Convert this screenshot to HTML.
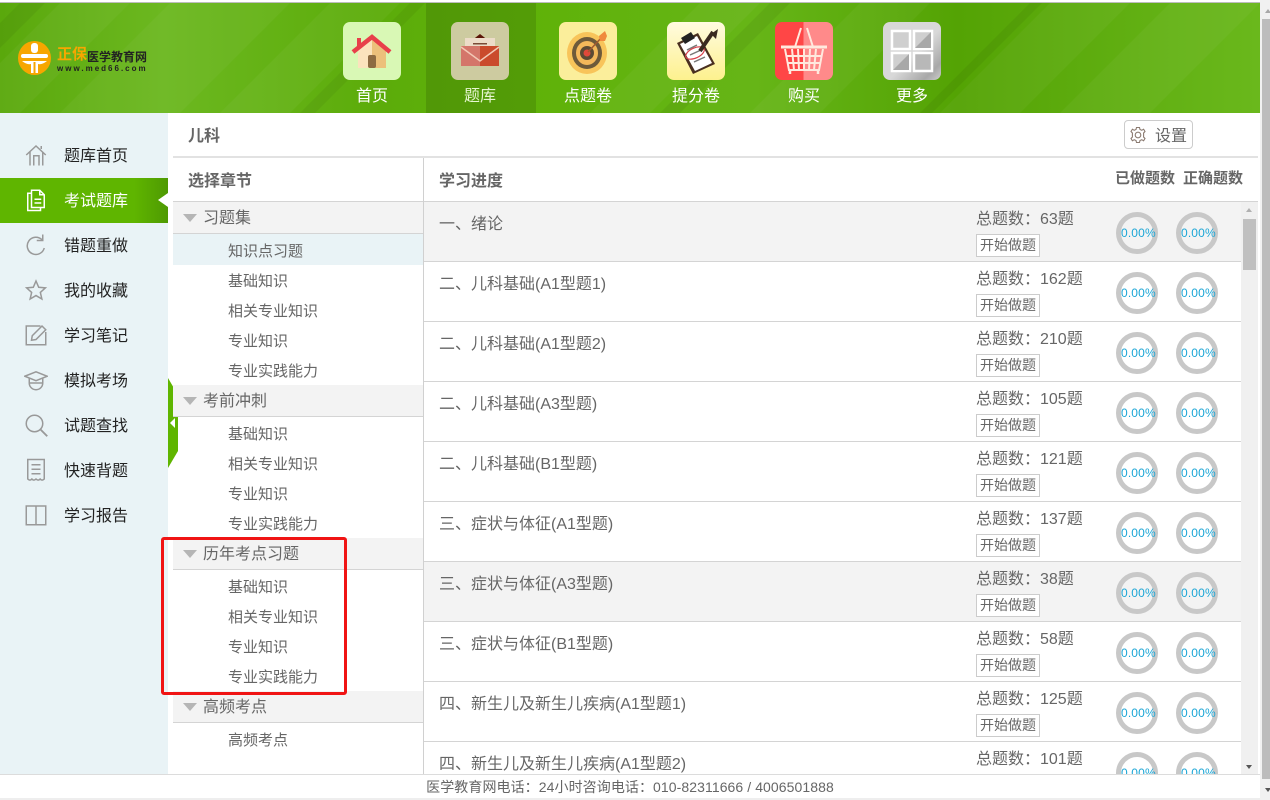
<!DOCTYPE html>
<html lang="zh-CN">
<head>
<meta charset="utf-8">
<title>题库</title>
<style>
html,body{margin:0;padding:0;width:1270px;height:800px;overflow:hidden;background:#fff}
body{position:relative;font-family:"Liberation Sans","Noto Sans CJK SC",sans-serif;color:#666}
div,span,svg{position:absolute;box-sizing:border-box}
.t{white-space:nowrap;line-height:20px}
.nl{color:#fff;font-size:16px;width:108px;text-align:center;top:87px}
.ic{top:22px;width:58px;height:58px;border-radius:7px;overflow:hidden}
.m{left:64px;font-size:16px;color:#222;width:100px}
.si{left:24px;width:24px;height:24px;fill:none;stroke:#999;stroke-width:2}
.g{left:173px;width:250px;height:32px;background:#f3f3f3;border-bottom:1px solid #d4d4d4}
.g span{left:30px;top:7px;font-size:16px;line-height:20px;color:#666;white-space:nowrap}
.g i{position:absolute;left:10px;top:12px;border-left:7px solid transparent;border-right:7px solid transparent;border-top:8px solid #b5b5b5}
.c{left:228px;font-size:15px;color:#666}
.r{left:424px;width:817px;height:60px;border-bottom:1px solid #d4d4d4}
.r .n{left:15px;top:13px;font-size:16px;color:#666;white-space:nowrap;line-height:20px}
.r .q{left:552px;top:8px;font-size:16px;color:#666;white-space:nowrap;line-height:20px}
.r .b{left:552px;top:32px;width:64px;height:23px;border:1px solid #ccc;background:#fff;font-size:14px;line-height:21px;text-align:center;color:#666;white-space:nowrap}
.r .o{top:10px;width:42px;height:42px;border-radius:50%;border:5px solid #c8c8c8;font-size:12px;line-height:32px;text-align:center;color:#1ba6d6;letter-spacing:.15px;padding-right:1px}
.o1{left:692px}.o2{left:752px}
</style>
</head>
<body>
<div style="left:0;top:2px;width:1260px;height:1px;background:#bdbdbd"></div>

<!-- header -->
<svg style="left:0;top:3px" width="1260" height="110" viewBox="0 0 1260 110">
<defs>
<linearGradient id="hg" x1="0" y1="0" x2="1" y2="0">
<stop offset="0" stop-color="#5aa80c"/><stop offset=".13" stop-color="#6cb820"/><stop offset=".3" stop-color="#5cac0a"/><stop offset=".42" stop-color="#5fb208"/><stop offset=".6" stop-color="#66b517"/><stop offset=".76" stop-color="#54a304"/><stop offset="1" stop-color="#6ab81c"/>
</linearGradient>
</defs>
<rect width="1260" height="110" fill="url(#hg)"/>
<g fill="#fff" fill-opacity=".04">
<polygon points="60,0 130,0 20,110 -50,110"/>
<polygon points="170,0 290,0 180,110 60,110"/>
<polygon points="330,0 400,0 290,110 220,110"/>
<polygon points="700,0 760,0 650,110 590,110"/>
<polygon points="860,0 930,0 820,110 750,110"/>
<polygon points="1050,0 1130,0 1020,110 940,110"/>
<polygon points="1170,0 1260,0 1150,110 1060,110"/>
</g>
<g fill="#000" fill-opacity=".05">
<polygon points="20,0 45,0 -65,110 -90,110"/>
<polygon points="410,0 425,0 315,110 300,110"/>
<polygon points="770,0 790,0 680,110 660,110"/>
<polygon points="1030,0 1042,0 932,110 920,110"/>
</g>
<rect x="426" width="110" height="110" fill="#000" fill-opacity=".12"/>
</svg>

<!-- logo -->
<svg style="left:18px;top:41px" width="33" height="34" viewBox="0 0 33 34">
<ellipse cx="16.5" cy="17" rx="16.5" ry="17" fill="#f7a600"/>
<rect x="13" y="2" width="7" height="10" rx="3" fill="#fff"/>
<rect x="3" y="13" width="27" height="4" rx="2" fill="#fff"/>
<path d="M4 20 H29 Q24 24 20 23 V32 H17.5 V21 H15.5 V32 H13 V23 Q9 24 4 20 Z" fill="#fff"/>
</svg>
<div class="t" style="left:57px;top:45px;font-size:15px;font-weight:bold;color:#f7a600;line-height:20px">正保</div>
<div class="t" style="left:87px;top:48px;font-size:12px;font-weight:bold;color:#222;line-height:18px">医学教育网</div>
<div class="t" style="left:57px;top:63px;font-size:8px;font-weight:bold;color:#222;letter-spacing:2px;line-height:12px">www.med66.com</div>

<!-- nav icons -->
<div class="ic" style="left:343px;background:#d9f8b5">
<svg width="58" height="58" viewBox="0 0 58 58" style="left:0;top:0">
<polygon points="15,28 29,16 43,28 43,46 15,46" fill="#fbe3bd"/>
<polygon points="29,16 43,28 43,46 29,46" fill="#ecc07b"/>
<path d="M10 30 L29 15 L47 30" fill="none" stroke="#e8404a" stroke-width="4.5"/>
<rect x="14" y="16" width="4" height="9" fill="#e8404a"/>
<rect x="25" y="33" width="8" height="13" rx="2" fill="#8d6b42"/>
</svg></div>
<div class="ic" style="left:451px;background:#cdcba0">
<svg width="58" height="58" viewBox="0 0 58 58" style="left:0;top:0">
<polygon points="29,12 38,19 20,19" fill="#5c1608"/>
<rect x="14" y="16" width="30" height="22" fill="#ecdcc8"/>
<rect x="22" y="21" width="14" height="1.5" fill="#7a4a36"/>
<rect x="10" y="24" width="19" height="20" fill="#d4766a"/>
<rect x="29" y="24" width="19" height="20" fill="#ca4b2c"/>
<path d="M10 25 L29 39 L48 25" fill="none" stroke="#f2c9b6" stroke-width="1.5"/>
</svg></div>
<div class="ic" style="left:559px;background:#fbee9b">
<svg width="58" height="58" viewBox="0 0 58 58" style="left:0;top:0">
<ellipse cx="28" cy="31" rx="20" ry="21" fill="#f8c45a"/>
<ellipse cx="28" cy="31" rx="15" ry="16" fill="#6e5a3a"/>
<ellipse cx="28" cy="31" rx="11" ry="12" fill="#f4b85a"/>
<circle cx="28" cy="31" r="7" fill="#5c4a34"/>
<circle cx="28" cy="31" r="3.5" fill="#e0483a"/>
<path d="M29 30 L44 14" stroke="#a05a30" stroke-width="1.5"/>
<polygon points="40,14 46,9 48,14 46,19 41,19" fill="#f08a3c"/>
</svg></div>
<div class="ic" style="left:667px;background:linear-gradient(#fffbe0,#fdf18e)">
<svg width="58" height="58" viewBox="0 0 58 58" style="left:0;top:0">
<polygon points="10,21 31,11 48,42 26,52" fill="#4a3020"/>
<polygon points="13,22 30,14 45,41 28,49" fill="#fff"/>
<polygon points="14,16 24,10 28,16 18,22" fill="#222"/>
<path d="M20 28 L30 23 M23 33 L34 28 M27 40 L38 35" stroke="#777" stroke-width="1.5"/>
<ellipse cx="28" cy="31" rx="10" ry="5" fill="none" stroke="#d8404a" stroke-width="1.2" transform="rotate(-25 28 31)"/>
<path d="M33 29 L46 10" stroke="#3a2a20" stroke-width="4"/>
<polygon points="44,12 51,7 49,17" fill="#3a2a20"/>
</svg></div>
<div class="ic" style="left:775px;background:linear-gradient(90deg,#ff4646 49%,#ff8a8a 49%)">
<svg width="58" height="58" viewBox="0 0 58 58" style="left:0;top:0;fill:none;stroke:#ffe9de;stroke-width:2">
<path d="M20 25 L26 6 M38 25 L32 6"/>
<path d="M6 25 H52" stroke-width="3"/>
<path d="M10 27 L14 48 H44 L48 27"/>
<path d="M12 34 H46 M13 41 H45"/>
<path d="M17 27 L19 48 M23 27 L24 48 M29 27 V48 M35 27 L34 48 M41 27 L39 48"/>
<path d="M15 48 V52 M43 48 V52" stroke-width="2.5"/>
</svg></div>
<div class="ic" style="left:883px;background:linear-gradient(135deg,#d8d8d8 55%,#a8a8a8 85%,#ccc)">
<svg width="58" height="58" viewBox="0 0 58 58" style="left:0;top:0">
<g stroke="#fff" stroke-width="2.5" fill="#cfcfcf">
<rect x="9" y="9" width="18" height="18"/>
<rect x="31" y="9" width="18" height="18"/>
<rect x="9" y="31" width="18" height="18"/>
<rect x="31" y="31" width="18" height="18" fill="#b8b8b8"/>
</g>
<polygon points="48,10 48,26 32,26" fill="#a8a8a8"/>
<polygon points="26,32 26,48 10,48" fill="#a8a8a8"/>
</svg></div>

<div class="nl t" style="left:318px">首页</div>
<div class="nl t" style="left:426px;color:#e6f6d0">题库</div>
<div class="nl t" style="left:534px">点题卷</div>
<div class="nl t" style="left:642px">提分卷</div>
<div class="nl t" style="left:750px">购买</div>
<div class="nl t" style="left:858px">更多</div>

<!-- left sidebar -->
<div style="left:0;top:113px;width:168px;height:661px;background:#e9f3f6"></div>
<div style="left:0;top:178px;width:168px;height:45px;background:linear-gradient(90deg,#5fb500 80%,#4e9a02)"></div>
<div style="left:158px;top:193px;border-top:7px solid transparent;border-bottom:7px solid transparent;border-right:10px solid #fff"></div>

<svg class="si" style="top:143px" viewBox="0 0 32 32"><path d="M3 16 L16 4 L29 16 M8 12 V30 M13 30 V17 H20 V30 M25 12 V30"/><path d="M23 8 V4"/></svg>
<svg class="si" style="top:188px;stroke:#fff" viewBox="0 0 32 32"><path d="M10 3 H21 L27 9 V26 H10 Z M21 3 V9 H27 M10 7 H5 V30 H22 V26 M14 15 H23 M14 20 H23"/></svg>
<svg class="si" style="top:233px" viewBox="0 0 32 32"><path d="M24 9 A11.5 11.5 0 1 0 27 20"/><path d="M25 2 V10 H17"/></svg>
<svg class="si" style="top:278px" viewBox="0 0 32 32"><polygon points="16,4 19.6,12.4 28.5,13.2 21.8,19.2 23.8,28 16,23.4 8.2,28 10.2,19.2 3.5,13.2 12.4,12.4"/></svg>
<svg class="si" style="top:323px" viewBox="0 0 32 32"><path d="M22 4 H3 V29 H29 V12"/><path d="M10 23 L11 17 L24 4 L29 9 L16 22 Z"/></svg>
<svg class="si" style="top:368px" viewBox="0 0 32 32"><path d="M1 11 L16 5 L31 11 L16 17 Z"/><path d="M7 14 V20 A9 9 0 0 0 25 20 V14"/><path d="M7 20 H25"/></svg>
<svg class="si" style="top:413px" viewBox="0 0 32 32"><circle cx="14" cy="14" r="11"/><path d="M22 22 L31 31" stroke-width="2.5"/></svg>
<svg class="si" style="top:458px" viewBox="0 0 32 32"><path d="M5 2 H27 V28 Q24 31 21.5 28 Q19 31 16 28 Q13 31 10.5 28 Q8 31 5 28 Z M10 9 H22 M10 15 H22 M10 21 H22"/></svg>
<svg class="si" style="top:503px" viewBox="0 0 32 32"><path d="M3 4 H16 V29 H3 Z M16 4 H29 V29 H16" /></svg>

<div class="m t" style="top:147px">题库首页</div>
<div class="m t" style="top:192px;color:#fff">考试题库</div>
<div class="m t" style="top:237px">错题重做</div>
<div class="m t" style="top:282px">我的收藏</div>
<div class="m t" style="top:327px">学习笔记</div>
<div class="m t" style="top:372px">模拟考场</div>
<div class="m t" style="top:417px">试题查找</div>
<div class="m t" style="top:462px">快速背题</div>
<div class="m t" style="top:507px">学习报告</div>

<!-- collapse toggle -->
<svg style="left:168px;top:378px" width="10" height="90" viewBox="0 0 10 90">
<polygon points="0,0 10,17 10,73 0,90" fill="#5fb500"/>
<polygon points="2,45 7,40 7,50" fill="#fff"/>
</svg>

<!-- top title bar -->
<div class="t" style="left:188px;top:127px;font-size:16px;font-weight:bold;color:#666">儿科</div>
<div style="left:1124px;top:120px;width:69px;height:29px;border:1px solid #ccc;border-radius:4px;background:#fff"></div>
<svg style="left:1129px;top:126px" width="18" height="18" viewBox="0 0 18 18" fill="none" stroke="#8a7a70" stroke-width="1.1">
<circle cx="9" cy="9" r="2.8"/>
<path d="M7.5 1.5 H10.5 L11 3.5 L12.8 4.3 L14.6 3.2 L16 5.5 L14.6 7 V9 V11 L16 12.5 L14.6 14.8 L12.8 13.7 L11 14.5 L10.5 16.5 H7.5 L7 14.5 L5.2 13.7 L3.4 14.8 L2 12.5 L3.4 11 V7 L2 5.5 L3.4 3.2 L5.2 4.3 L7 3.5 Z"/>
</svg>
<div class="t" style="left:1155px;top:127px;font-size:16px;color:#666">设置</div>
<div style="left:173px;top:156px;width:1085px;height:2px;background:#e2e2e2"></div>

<!-- chapter column -->
<div style="left:423px;top:158px;width:1px;height:616px;background:#d0d0d0"></div>
<div class="t" style="left:188px;top:172px;font-size:16px;font-weight:bold;color:#666">选择章节</div>

<div class="g" style="top:201px;height:33px;border-top:1px solid #d4d4d4"><i></i><span style="top:7px">习题集</span></div>
<div style="left:173px;top:234px;width:250px;height:31px;background:#e9f3f6"></div>
<div class="c t" style="top:242px">知识点习题</div>
<div class="c t" style="top:272px">基础知识</div>
<div class="c t" style="top:302px">相关专业知识</div>
<div class="c t" style="top:332px">专业知识</div>
<div class="c t" style="top:362px">专业实践能力</div>

<div class="g" style="top:385px"><i></i><span>考前冲刺</span></div>
<div class="c t" style="top:425px">基础知识</div>
<div class="c t" style="top:455px">相关专业知识</div>
<div class="c t" style="top:485px">专业知识</div>
<div class="c t" style="top:515px">专业实践能力</div>

<div class="g" style="top:538px"><i></i><span>历年考点习题</span></div>
<div class="c t" style="top:578px">基础知识</div>
<div class="c t" style="top:608px">相关专业知识</div>
<div class="c t" style="top:638px">专业知识</div>
<div class="c t" style="top:668px">专业实践能力</div>

<div class="g" style="top:691px"><i></i><span>高频考点</span></div>
<div class="c t" style="top:731px">高频考点</div>

<!-- progress column -->
<div class="t" style="left:439px;top:172px;font-size:16px;font-weight:bold;color:#666">学习进度</div>
<div class="t" style="left:1115px;top:169px;font-size:15px;font-weight:bold;color:#666">已做题数</div>
<div class="t" style="left:1183px;top:169px;font-size:15px;font-weight:bold;color:#666">正确题数</div>
<div style="left:424px;top:201px;width:834px;height:1px;background:#d4d4d4"></div>

<div style="left:424px;top:202px;width:834px;height:572px;overflow:hidden">
<div class="r" style="left:0;top:0;background:#f3f3f3"><div class="n">一、绪论</div><div class="q">总题数：63题</div><div class="b">开始做题</div><div class="o o1">0.00%</div><div class="o o2">0.00%</div></div>
<div class="r" style="left:0;top:60px"><div class="n">二、儿科基础(A1型题1)</div><div class="q">总题数：162题</div><div class="b">开始做题</div><div class="o o1">0.00%</div><div class="o o2">0.00%</div></div>
<div class="r" style="left:0;top:120px"><div class="n">二、儿科基础(A1型题2)</div><div class="q">总题数：210题</div><div class="b">开始做题</div><div class="o o1">0.00%</div><div class="o o2">0.00%</div></div>
<div class="r" style="left:0;top:180px"><div class="n">二、儿科基础(A3型题)</div><div class="q">总题数：105题</div><div class="b">开始做题</div><div class="o o1">0.00%</div><div class="o o2">0.00%</div></div>
<div class="r" style="left:0;top:240px"><div class="n">二、儿科基础(B1型题)</div><div class="q">总题数：121题</div><div class="b">开始做题</div><div class="o o1">0.00%</div><div class="o o2">0.00%</div></div>
<div class="r" style="left:0;top:300px"><div class="n">三、症状与体征(A1型题)</div><div class="q">总题数：137题</div><div class="b">开始做题</div><div class="o o1">0.00%</div><div class="o o2">0.00%</div></div>
<div class="r" style="left:0;top:360px;background:#f3f3f3"><div class="n">三、症状与体征(A3型题)</div><div class="q">总题数：38题</div><div class="b">开始做题</div><div class="o o1">0.00%</div><div class="o o2">0.00%</div></div>
<div class="r" style="left:0;top:420px"><div class="n">三、症状与体征(B1型题)</div><div class="q">总题数：58题</div><div class="b">开始做题</div><div class="o o1">0.00%</div><div class="o o2">0.00%</div></div>
<div class="r" style="left:0;top:480px"><div class="n">四、新生儿及新生儿疾病(A1型题1)</div><div class="q">总题数：125题</div><div class="b">开始做题</div><div class="o o1">0.00%</div><div class="o o2">0.00%</div></div>
<div class="r" style="left:0;top:540px"><div class="n">四、新生儿及新生儿疾病(A1型题2)</div><div class="q">总题数：101题</div><div class="b">开始做题</div><div class="o o1">0.00%</div><div class="o o2">0.00%</div></div>
<!-- inner scrollbar -->
<div style="left:817px;top:0;width:17px;height:572px;background:#f0f0f0"></div>
<div style="left:819px;top:17px;width:13px;height:51px;background:#c0c0c0"></div>
<div style="left:822px;top:6px;border-left:3.5px solid transparent;border-right:3.5px solid transparent;border-bottom:4px solid #b0b0b0"></div>
<div style="left:822px;top:563px;border-left:3.5px solid transparent;border-right:3.5px solid transparent;border-top:4px solid #555"></div>
</div>

<!-- highlight rectangle -->
<div style="left:161px;top:537px;width:186px;height:158px;border:3px solid #f01414;border-radius:3px"></div>

<!-- footer -->
<div style="left:0;top:774px;width:1260px;height:24px;background:#fff;border-top:1px solid #dcdcdc"></div>
<div style="left:0;top:798px;width:1260px;height:2px;background:#eee"></div>
<div class="t" style="left:0;top:777px;width:1260px;text-align:center;font-size:14px;letter-spacing:.08px;color:#666">医学教育网电话：24小时咨询电话：010-82311666 / 4006501888</div>

<!-- page scrollbar -->
<div style="left:1260px;top:0;width:10px;height:800px;background:#f1f1f1"></div>
<div style="left:1262px;top:19px;width:8px;height:760px;background:#bcbcbc"></div>
<div style="left:1265px;top:9px;border-left:3.5px solid transparent;border-right:3.5px solid transparent;border-bottom:4px solid #a8a8a8"></div>
<div style="left:1265px;top:788px;border-left:3.5px solid transparent;border-right:3.5px solid transparent;border-top:4px solid #555"></div>
</body>
</html>
